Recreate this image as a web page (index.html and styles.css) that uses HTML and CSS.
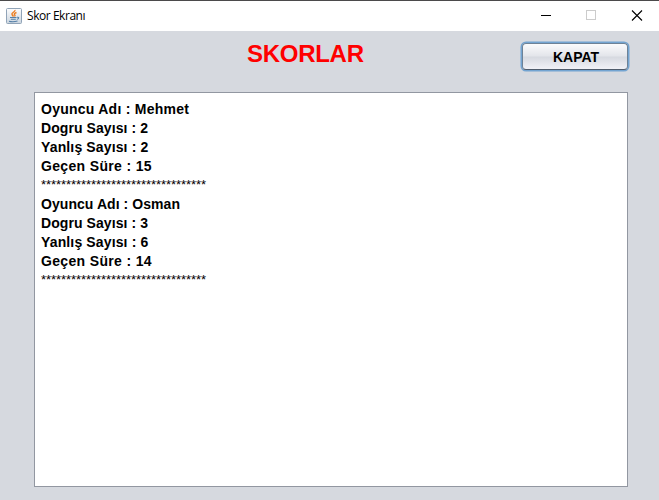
FILE: index.html
```html
<!DOCTYPE html>
<html lang="tr">
<head>
<meta charset="utf-8">
<title>Skor Ekranı</title>
<link rel="stylesheet" href="styles.css">
</head>
<body>
<div class="window">
  <header class="titlebar">
    <svg class="app-icon" width="16" height="16" viewBox="0 0 16 16">
      <defs>
        <linearGradient id="tile" x1="0" y1="0" x2="0" y2="1">
          <stop offset="0" stop-color="#fdfdfe"/>
          <stop offset="1" stop-color="#cbd5df"/>
        </linearGradient>
      </defs>
      <rect x="0.5" y="0.5" width="15" height="15" rx="1" fill="url(#tile)" stroke="#91a4b8"/>
      <path d="M9 2C9.400 4 5 4.700 6 6.500L7.500 8.500M10.500 4.500C8.500 5.300 7.500 6 9 7.300L8.500 8.500" fill="none" stroke="#ec7d20" stroke-width="1.400"/>
      <path d="M4 9.500H10.500M4.800 11.300H9.800M3 13.200Q7 14.300 11.500 13M11 9.300Q13.500 9 12.300 10.600L11 11.400" fill="none" stroke="#5580a8" stroke-width="1.100"/>
    </svg>
    <span class="caption">Skor Ekranı</span>
    <div class="controls">
      <svg width="46" height="30" viewBox="0 0 46 30"><path d="M18 14.500H28" stroke="#000"/></svg>
      <svg width="46" height="30" viewBox="0 0 46 30"><rect x="17.500" y="9.500" width="9" height="9" fill="none" stroke="#ccc"/></svg>
      <svg width="44" height="30" viewBox="0 0 44 30"><path d="M17 9.500L27 19.500M27 9.500L17 19.500" stroke="#000" stroke-width="1.100"/></svg>
    </div>
  </header>
  <main class="content">
    <div class="heading">
      <h1>SKORLAR</h1>
      <button class="close">KAPAT</button>
    </div>
    <div class="scores">
      <p class="player">Oyuncu Adı : Mehmet</p>
      <p class="correct">Dogru Sayısı : 2</p>
      <p class="wrong">Yanlış Sayısı : 2</p>
      <p class="time">Geçen Süre : 15</p>
      <p class="stars">*********************************</p>
      <p>Oyuncu Adı : Osman</p>
      <p class="correct">Dogru Sayısı : 3</p>
      <p class="wrong">Yanlış Sayısı : 6</p>
      <p class="time">Geçen Süre : 14</p>
      <p class="stars">*********************************</p>
    </div>
  </main>
</div>
</body>
</html>
```
FILE: styles.css
```css
* { box-sizing: border-box; }
body { margin: 0; }
.window {
  width: 659px;
  height: 500px;
  display: flex;
  flex-direction: column;
  border-top: 1px solid #4b4a4b;
  background: #d6d9df;
  font-family: "Liberation Sans", Arial, sans-serif;
  color: #000;
  overflow: hidden;
}
.titlebar {
  height: 30px;
  flex: none;
  display: flex;
  align-items: center;
  padding-left: 6px;
  background: #fff;
}
.app-icon { display: block; }
.caption {
  margin-left: 5px;
  font: 12px/16px "Open Sans", "Noto Sans", sans-serif;
  letter-spacing: -0.45px;
}
.controls { display: flex; margin-left: auto; }
.controls svg { display: block; }
.content {
  flex: 1;
  display: flex;
  flex-direction: column;
  padding: 10px 31px 13px 34px;
}
.heading {
  height: 51px;
  flex: none;
  display: flex;
  justify-content: space-between;
  align-items: flex-start;
  padding-left: 213px;
}
h1 {
  margin: 0;
  font-size: 24px;
  line-height: 26px;
  letter-spacing: -0.28px;
  color: #f00;
}
.close {
  width: 106px;
  height: 27px;
  margin: 2px 0 0;
  padding: 1px 0 0 2px;
  border: 1px solid #6e8296;
  border-bottom-color: #4f5c6c;
  border-radius: 4px;
  background: linear-gradient(#fbfbfc, #e3e5ea 48%, #d6d9e0 52%, #f1f2f7);
  box-shadow: 0 0 0 1.5px #73a4d1;
  font: bold 14px/20px "Liberation Sans", Arial, sans-serif;
  color: #000;
}
.scores {
  width: 594px;
  height: 395px;
  padding: 7px 6px;
  border: 1px solid #9297a1;
  background: #fff;
}
.scores p {
  margin: 0;
  font-size: 14px;
  font-weight: bold;
  line-height: 19px;
  letter-spacing: 0.06px;
}
.scores .player { letter-spacing: 0.25px; }
.scores .correct { letter-spacing: 0.08px; }
.scores .wrong { letter-spacing: 0.14px; }
.scores .time { letter-spacing: 0.34px; }
.scores .stars {
  height: 19px;
  font-size: 13px;
  font-weight: normal;
  line-height: 17px;
  letter-spacing: -0.06px;
}
```
